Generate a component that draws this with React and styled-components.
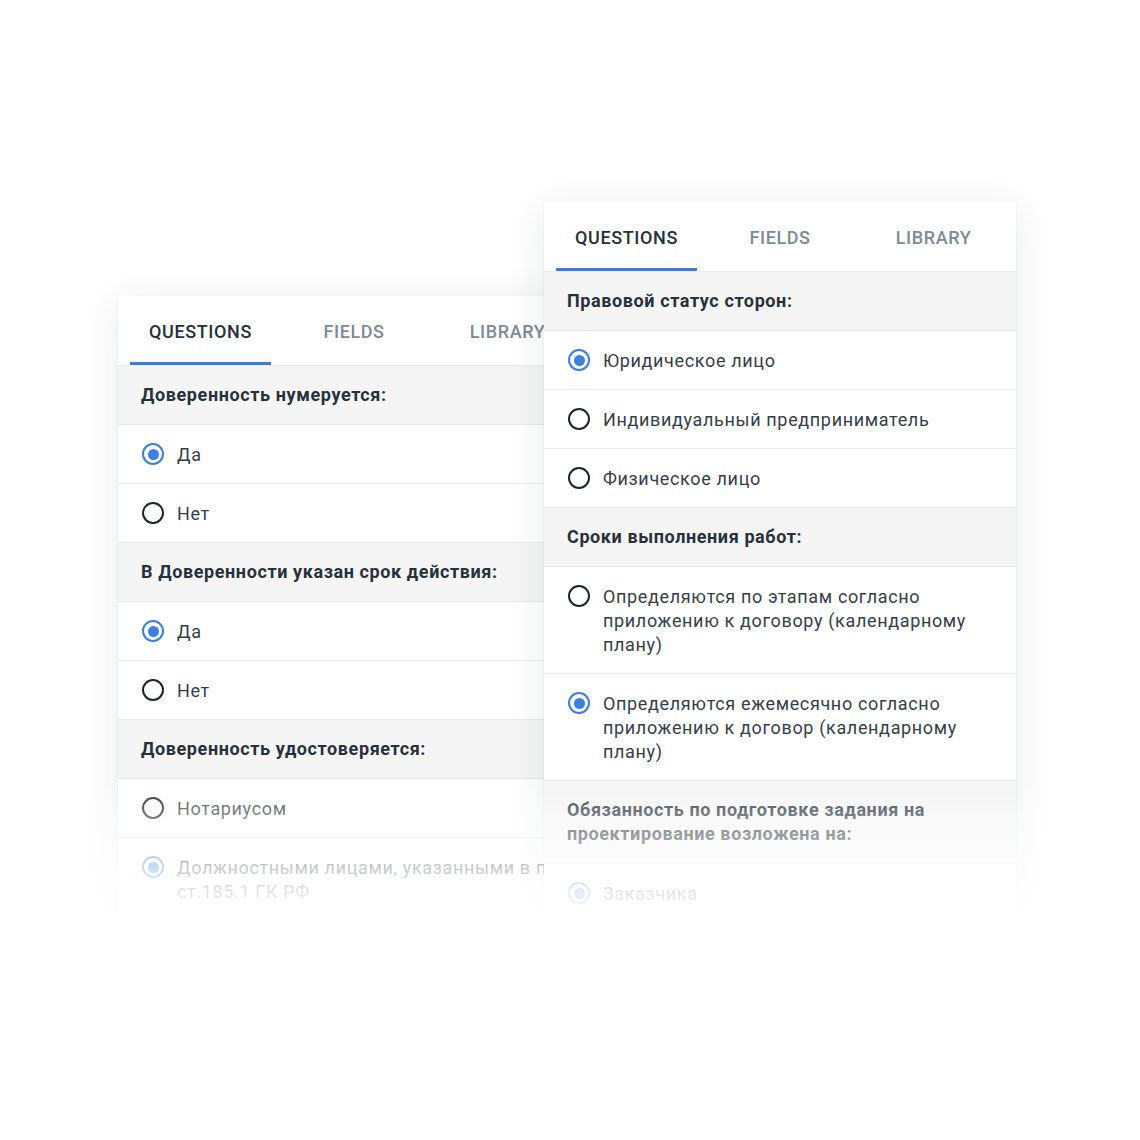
import React from 'react'
import styled, { createGlobalStyle } from 'styled-components'

const Global = createGlobalStyle`
  html, body {
    margin: 0;
    padding: 0;
    background: #ffffff;
  }
  body {
    font-family: Roboto, "Noto Sans", "Liberation Sans", sans-serif;
    -webkit-font-smoothing: antialiased;
  }
`

const Stage = styled.div`
  position: relative;
  width: 1140px;
  height: 1140px;
  overflow: hidden;
  background: #fff;
`

const Row = styled.div`
  display: flex;
  align-items: flex-start;
  padding: 202px 0 0 118px;
`

const Card = styled.section`
  position: relative;
  width: 472px;
  flex: none;
  background: #fff;
  border-radius: 3px;
  box-shadow: 0 6px 40px rgba(20, 30, 45, 0.09), 0 1px 4px rgba(20, 30, 45, 0.04);
  margin-top: ${p => p.$top || 0}px;
  margin-left: ${p => p.$shift || 0}px;
  z-index: ${p => p.$z || 0};
  padding-bottom: 30px;
`

const Tabs = styled.nav`
  display: flex;
  gap: 12.5px;
  height: 69px;
  padding: 0 12px;
  border-bottom: 1px solid #ececec;
`

const Tab = styled.div`
  position: relative;
  width: 141px;
  display: flex;
  align-items: center;
  justify-content: center;
  padding-top: 1px;
  font-size: 18px;
  font-weight: 500;
  letter-spacing: 0.6px;
  color: ${p => (p.$active ? '#25303b' : '#7d8a97')};
  &::after {
    content: '';
    position: absolute;
    left: 0;
    right: 0;
    bottom: 0;
    height: 3px;
    background: ${p => (p.$active ? '#3b7ddd' : 'transparent')};
  }
`

const Header = styled.div`
  background: #f5f5f5;
  padding: 17px 23px;
  font-size: 18px;
  line-height: 24px;
  font-weight: 700;
  letter-spacing: 0.6px;
  color: #27313b;
  border-bottom: 1px solid #e9e9e9;
`

const Option = styled.div`
  display: flex;
  align-items: flex-start;
  gap: 12px;
  padding: 18px 23px 16px 24px;
  border-bottom: 1px solid #ebebeb;
  font-size: 18px;
  line-height: 24px;
  letter-spacing: 0.65px;
  color: #353e48;
  & > span:last-child {
    margin-left: 1px;
  }
`

const Radio = styled.span`
  flex: none;
  box-sizing: border-box;
  width: 22px;
  height: 22px;
  border-radius: 50%;
  border: 2.5px solid ${p => (p.$on ? '#3c7fe0' : '#1d242c')};
  display: flex;
  align-items: center;
  justify-content: center;
  &::after {
    content: '';
    width: 11px;
    height: 11px;
    border-radius: 50%;
    background: ${p => (p.$on ? '#3c7fe0' : 'transparent')};
  }
`

const Fade = styled.div`
  position: absolute;
  left: 0;
  right: 0;
  top: 778px;
  height: 150px;
  background: linear-gradient(
    to bottom,
    rgba(255, 255, 255, 0) 0%,
    rgba(255, 255, 255, 0.45) 30%,
    rgba(255, 255, 255, 0.85) 75%,
    #fff 100%
  );
  z-index: 5;
  pointer-events: none;
`

const Bottom = styled.div`
  position: absolute;
  left: 0;
  right: 0;
  top: 927px;
  bottom: 0;
  background: #fff;
  z-index: 5;
`

const TabBar = () => (
  <Tabs>
    <Tab $active>QUESTIONS</Tab>
    <Tab>FIELDS</Tab>
    <Tab>LIBRARY</Tab>
  </Tabs>
)

const Choice = ({ on, children }) => (
  <Option>
    <Radio $on={on} />
    <span>{children}</span>
  </Option>
)

export default function App() {
  return (
    <Stage>
      <Global />
      <Row>
        <Card $top={94} $z={1}>
          <TabBar />
          <Header>Доверенность нумеруется:</Header>
          <Choice on>Да</Choice>
          <Choice>Нет</Choice>
          <Header>В Доверенности указан срок действия:</Header>
          <Choice on>Да</Choice>
          <Choice>Нет</Choice>
          <Header>Доверенность удостоверяется:</Header>
          <Choice>Нотариусом</Choice>
          <Choice on>Должностными лицами, указанными в п.7 ст.185.1 ГК РФ</Choice>
        </Card>
        <Card $shift={-46} $z={2}>
          <TabBar />
          <Header>Правовой статус сторон:</Header>
          <Choice on>Юридическое лицо</Choice>
          <Choice>Индивидуальный предприниматель</Choice>
          <Choice>Физическое лицо</Choice>
          <Header>Сроки выполнения работ:</Header>
          <Choice>
            Определяются по этапам согласно приложению к договору (календарному
            плану)
          </Choice>
          <Choice on>
            Определяются ежемесячно согласно приложению к договор (календарному
            плану)
          </Choice>
          <Header>Обязанность по подготовке задания на проектирование возложена на:</Header>
          <Choice on>Заказчика</Choice>
        </Card>
      </Row>
      <Fade />
      <Bottom />
    </Stage>
  )
}
